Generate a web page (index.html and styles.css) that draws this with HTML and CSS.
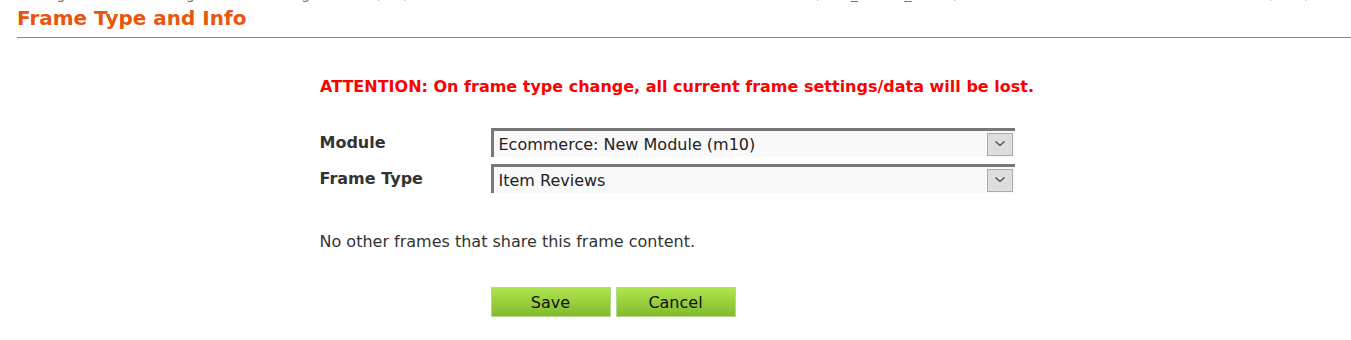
FILE: index.html
```html
<!DOCTYPE html>
<html lang="en">
<head>
    <meta charset="UTF-8">
    <title>Frame Type and Info</title>
    <link rel="stylesheet" href="styles.css">
</head>
<body>
    <div class="crumbs">Page heading: Listing (f12) &nbsp; Frame name (item_review_frame) &nbsp; Module (m10) &nbsp; Frame type (ecommerce item reviews)</div>
    <h2 class="section-title">Frame Type and Info</h2>

    <div class="frame-form">
        <p class="attention">ATTENTION: On frame type change, all current frame settings/data will be lost.</p>

        <div class="form-row">
            <label class="form-label">Module</label>
            <div class="select-box">
                <span class="select-value">Ecommerce: New Module (m10)</span>
                <span class="select-arrow">
                    <svg width="12" height="8" viewBox="0 0 12 8"><path d="M1.5 1.5 L6 5.5 L10.5 1.5" fill="none" stroke="#444" stroke-width="1.2"/></svg>
                </span>
            </div>
        </div>
        <div class="form-row">
            <label class="form-label">Frame Type</label>
            <div class="select-box">
                <span class="select-value">Item Reviews</span>
                <span class="select-arrow">
                    <svg width="12" height="8" viewBox="0 0 12 8"><path d="M1.5 1.5 L6 5.5 L10.5 1.5" fill="none" stroke="#444" stroke-width="1.2"/></svg>
                </span>
            </div>
        </div>

        <p class="share-note">No other frames that share this frame content.</p>

        <div class="buttons">
            <button class="btn">Save</button>
            <button class="btn">Cancel</button>
        </div>
    </div>
</body>
</html>
```

FILE: styles.css
```css
body {
    margin: 0;
    font-family: "DejaVu Sans", Verdana, sans-serif;
    color: #333;
    overflow: hidden;
}
.crumbs {
    margin-top: -14px;
    height: 20px;
    line-height: 17px;
    padding-left: 40px;
    font-size: 14px;
    color: #777;
    word-spacing: 60px;
    white-space: nowrap;
}
.section-title {
    margin: 0 0 0 17px;
    padding: 0 0 7px 0;
    font-size: 20px;
    line-height: 24px;
    color: #e8560e;
    border-bottom: 1px solid #888;
}
.frame-form {
    width: 715px;
    margin: 0 auto;
    padding-left: 3px;
}
.attention {
    margin: 39px 0 32px 0;
    font-size: 16px;
    font-weight: bold;
    color: #f00;
    text-align: center;
}
.form-row {
    display: flex;
    align-items: center;
    margin-bottom: 7px;
}
.form-label {
    width: 171px;
    font-size: 16px;
    font-weight: bold;
    color: #333;
}
.select-box {
    display: flex;
    align-items: center;
    width: 521px;
    height: 26px;
    background: #f9f9f9;
    border-top: 3px solid #777;
    border-left: 3px solid #777;
}
.select-value {
    flex: 1;
    padding-left: 5px;
    font-size: 16px;
    color: #222;
}
.select-arrow {
    display: flex;
    align-items: center;
    justify-content: center;
    width: 24px;
    height: 21px;
    margin-right: 2px;
    background: #ddd;
    border: 1px solid #aaa;
}
.share-note {
    margin: 39px 0 36px 0;
    font-size: 16px;
}
.buttons {
    display: flex;
    gap: 5px;
    padding-left: 171px;
}
.btn {
    width: 120px;
    height: 30px;
    font-family: "DejaVu Sans", Verdana, sans-serif;
    font-size: 16px;
    color: #111;
    background: linear-gradient(#b0e44e, #80ba2c);
    border: 1px solid #b5d98a;
}
```
